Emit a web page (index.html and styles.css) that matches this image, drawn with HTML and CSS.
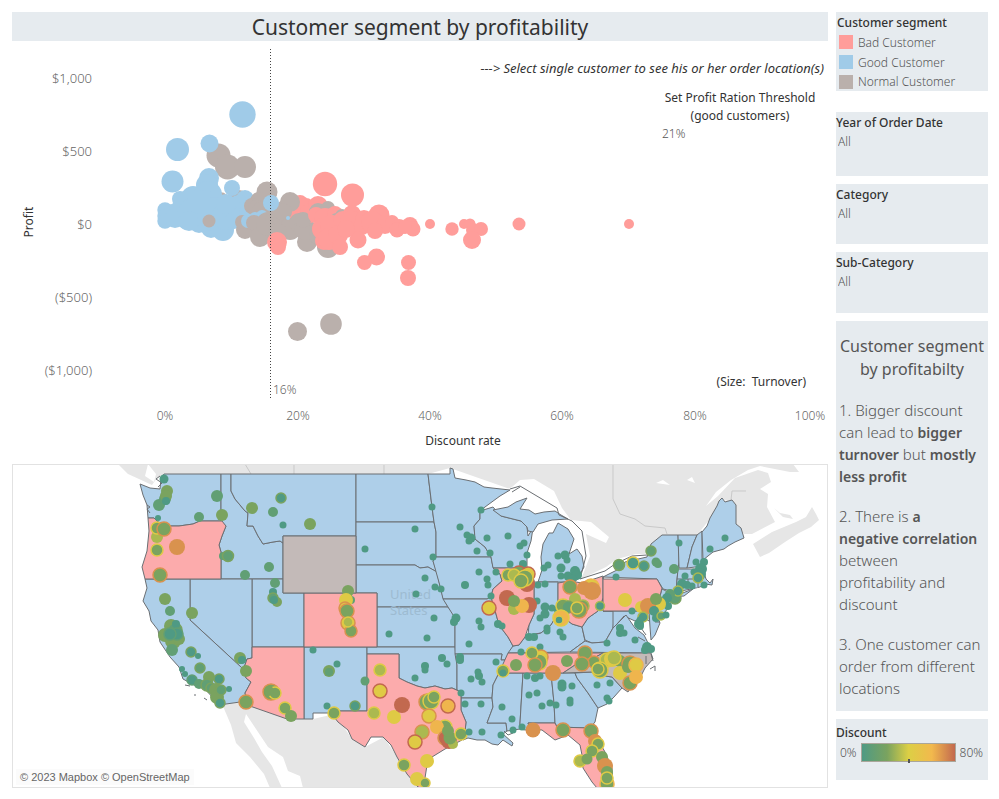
FILE: index.html
```html
<!DOCTYPE html>
<html lang="en">
<head>
<meta charset="utf-8">
<title>Customer segment by profitability</title>
<link rel="stylesheet" href="styles.css">
</head>
<body>
<div class="dashboard">
  <main class="main">
    <h1 class="title">Customer segment by profitability</h1>
    <section class="chart">
      <svg class="plot" viewBox="12 41 816 423" role="img" aria-label="Profit by discount rate">
        <g id="scatter"></g>
        <line class="ref-line" x1="270.5" y1="49" x2="270.5" y2="399"/>
        <g class="axis money">
          <text x="92" y="83">$1,000</text>
          <text x="92" y="156">$500</text>
          <text x="92" y="229">$0</text>
          <text x="92" y="302">($500)</text>
          <text x="92" y="375">($1,000)</text>
        </g>
        <g class="axis middle">
          <text x="165" y="420">0%</text>
          <text x="298" y="420">20%</text>
          <text x="430" y="420">40%</text>
          <text x="562" y="420">60%</text>
          <text x="695" y="420">80%</text>
          <text x="810" y="420">100%</text>
        </g>
        <text class="axis" x="273" y="394">16%</text>
        <text class="axis-title" x="463" y="445">Discount rate</text>
        <text class="axis-title" transform="translate(33 222) rotate(-90)">Profit</text>
      </svg>
      <div class="notes">
        <p class="hint">---&gt; Select single customer to see his or her order location(s)</p>
        <div class="threshold">
          <label for="threshold">Set Profit Ration Threshold<br>(good customers)</label>
          <input id="threshold" type="text" value="21%">
        </div>
      </div>
      <p class="size-note">(Size:&nbsp; Turnover)</p>
    </section>
    <section class="map">
      <svg class="geo" viewBox="13 465 814 322" role="img" aria-label="Order locations by state">
        <g class="land">
          <path d="M118,464 L128,474 L139,479 L152,485 L157,478 L164,474 L428,474 L450,468 L510,489 L520,486 L557,508 L572,521 L582,531 L586,556 L580,579 L605,574 L620,563 L647,553 L662,535 L697,535 L710,519 L722,499 L736,504 L736,524 L744,534 L752,534 L775,522 L767,507 L768,494 L760,489 L771,482 L768,473 L758,470 L735,478 L718,496 L706,506 L716,492 L731,480 L748,470 L760,466 L790,472 L799,472 L793,464 Z"/>
          <path d="M753,544 L760,557 L769,553 L785,542 L799,533 L811,527 L819,520 L816,514 L812,507 L806,517 L796,522 L772,532 Z"/>
          <path d="M774,508 L783,517 L793,519 L790,515 L780,513 Z"/>
          <path d="M222,704 L246,701 L290,719 L313,719 L335,714 L352,739 L365,747 L384,737 L412,780 L420,788 L303,788 L300,776 L288,771 L283,757 L268,747 L260,735 L246,714 L244,722 L254,738 L262,752 L272,766 L282,788 L270,788 L264,774 L250,757 L236,743 L231,725 Z"/>
        </g>
        <g class="water">
          <path d="M485,507 L497,495 L512,487 L520,480 L534,479 L554,491 L562,508 L571,520 L591,522 L609,537 L606,543 L586,534 L590,556 L582,577 L560,525 L535,514 Z"/>
          <path d="M577,581 L606,567 L617,559 L636,554 L646,554 L626,563 L618,572 L605,577 Z"/>
          <path d="M656,483 L663,480 L670,485 Z M687,480 L692,477 L695,483 Z M148,464 L156,474 L154,482 L145,476 Z"/>
        </g>
        <path class="creek" d="M245,464 L251,474 M294,464 V474 M384,464 V474 M613,464 V499 L620,514 L635,519 L645,526 L665,528 L667,534 M731,500 L732,491 L746,491"/>
        <g class="good">
          <path d="M140,484 L150,488 L160,489 L161,478 L164,474 H221 V521 H200 L193,524 L179,526 L169,526 L158,522 L154,518 L148,518 L147,505 L143,495 Z"/>
          <path d="M221,474 H231 V491 L235,499 L245,511 L248,513 L247,526 L253,526 L258,536 L263,544 L273,542 L280,541 L283,543 V579 H221 V552 L219,545 L222,536 L226,526 L221,521 Z"/>
          <path d="M231,474 H356 V536 H283 V543 L280,541 L273,542 L263,544 L258,536 L253,526 L247,526 L248,513 L245,511 L235,499 L231,491 Z"/>
          <path d="M356,474 H428 L430,491 L432,507 L434,522 H356 Z"/>
          <path d="M356,522 H434 L436,532 V557 L433,561 L437,572 L428,567 L420,568 L415,565 H356 Z"/>
          <path d="M356,565 H415 L420,568 L428,567 L437,572 L440,586 L443,597 L448,607 H377 V593 H356 Z"/>
          <path d="M377,607 H448 L452,612 L455,618 V647 H377 Z"/>
          <path d="M252,579 H283 V593 H304 V647 H252 Z"/>
          <path d="M190,579 H252 V658 L247,659 L245,665 L242,668 L190,620 Z"/>
          <path d="M145,579 H190 V620 L242,668 L246,678 L251,682 L245,693 L247,701 L219,705 L214,699 L205,689 L194,685 L183,679 L179,667 L170,657 L160,642 L158,630 L151,621 L149,611 L143,601 L147,588 Z"/>
          <path d="M304,647 H367 V711 H333 L331,713 H313 V719 H304 Z"/>
          <path d="M367,647 H455 L457,665 V690 L452,688 L445,689 L435,686 L425,688 L417,686 L407,682 L399,678 V654 H367 Z"/>
          <path d="M428,474 H450 V468 L453,469 L455,478 L466,480 L475,482 L484,487 L492,488 L510,490 L500,496 L485,507 L480,511 V519 L474,526 L475,539 L485,547 L491,557 H436 V532 L434,522 L432,507 Z"/>
          <path d="M436,557 H491 L493,567 L500,574 L502,581 L493,589 L491,597 L487,599 H443 L440,586 L433,561 Z"/>
          <path d="M480,511 L493,507 L501,516 L521,521 L527,527 L528,536 L533,528 L531,541 L527,553 L527,568 H493 L491,557 L485,547 L475,539 L474,526 L480,519 Z"/>
          <path d="M493,510 L508,507 L516,502 L527,498 L520,509 L529,510 L535,514 L544,512 L555,511 L561,515 L568,519 L552,520 L538,524 L533,532 L528,531 L527,527 L521,521 L501,516 Z"/>
          <path d="M558,523 L568,529 L574,539 L569,554 L577,549 L582,556 L584,567 L577,580 L568,582 H538 L542,570 L541,557 L543,544 L549,533 L553,533 Z"/>
          <path d="M534,582 H558 V613 L551,625 L541,633 L528,635 L529,625 L534,614 Z"/>
          <path d="M443,599 H487 L491,597 L496,614 L499,625 L508,637 L513,646 L510,653 L507,660 H501 L502,654 H455 V618 L448,607 Z"/>
          <path d="M508,653 L513,646 L519,645 L525,637 L541,633 L551,625 L558,613 L572,624 L582,627 L585,641 L570,652 Z"/>
          <path d="M603,598 V611 H615 L613,628 L605,642 L592,643 L585,640 L582,627 L588,618 L598,611 Z"/>
          <path d="M603,611 H655 L651,622 L642,617 L635,621 L624,616 L617,624 L613,628 V611 Z"/>
          <path d="M570,652 L585,641 L592,643 L605,642 L613,628 L620,621 L626,615 L635,628 L644,635 L649,645 L651,653 Z"/>
          <path d="M649,611 L655,611 L660,623 L655,635 L651,640 L650,627 Z"/>
          <path d="M603,577 L617,570 L625,562 L647,557 L651,544 L662,535 H678 L679,561 L677,579 L676,592 L663,589 L657,579 Z"/>
          <path d="M678,535 H697 L692,547 L687,568 H679 Z"/>
          <path d="M697,535 L702,531 V557 L703,566 L687,568 L692,547 Z"/>
          <path d="M702,532 L707,526 L710,518 L717,506 L719,501 L722,498 L725,502 L732,500 L736,505 V524 L741,528 L744,538 L735,542 L728,546 L724,549 L713,552 L708,556 L703,560 Z"/>
          <path d="M678,569 H703 L706,579 L710,583 L713,579 L712,585 L705,584 L700,587 L691,589 L676,592 Z"/>
          <path d="M677,579 H698 V588 M688,579 V589"/>
          <path d="M670,597 L680,594 L693,589 L684,596 Z"/>
          <path d="M662,589 L668,592 L669,607 L660,618 L655,610 L664,601 L660,596 Z"/>
          <path d="M455,654 H502 L501,660 H507 L499,673 L493,685 L492,698 H461 V692 L457,690 V665 Z"/>
          <path d="M461,698 H492 L493,707 L487,723 H506 L507,731 L503,734 L513,743 L512,746 L503,740 L498,745 L492,744 L485,740 L477,740 L468,738 L463,740 L465,732 L466,722 L461,710 Z"/>
          <path d="M499,673 H523 L520,723 V729 L507,731 L506,723 H487 L493,707 L492,698 L493,685 Z"/>
          <path d="M523,673 H551 L554,703 L555,723 H528 L530,729 L525,730 L520,729 V723 Z"/>
          <path d="M551,673 H575 L577,678 L588,693 L598,708 L595,722 L590,728 L557,727 L555,723 L554,703 Z"/>
          <path d="M575,673 L592,672 L598,675 L612,677 L622,688 L614,697 L607,704 L598,708 L588,693 L577,678 Z"/>
        </g>
        <g class="bad">
          <path d="M148,518 L154,518 L158,522 L169,526 L179,526 L193,524 L200,521 H222 L226,526 L222,536 L219,545 L221,552 V579 H145 L142,567 L147,551 L149,531 Z"/>
          <path d="M304,593 H377 V647 H304 Z"/>
          <path d="M252,647 H304 V719 H287 L247,705 V701 L245,693 L251,682 L246,678 L242,668 L245,665 L247,659 L252,658 Z"/>
          <path d="M367,654 H399 V678 L407,682 L417,686 L425,688 L435,686 L445,689 L452,688 L461,692 V710 L466,722 L465,732 L462,740 L445,749 L432,757 L427,765 L425,778 L428,790 L418,787 L407,774 L397,757 L391,745 L383,737 H371 L365,747 L352,739 L348,730 L338,722 L331,713 L333,711 H367 Z"/>
          <path d="M493,568 H527 L534,580 V614 L529,625 L525,637 L519,645 L513,646 L508,637 L499,625 L496,614 L491,597 L493,589 L502,581 L500,574 Z"/>
          <path d="M558,583 L570,581 L582,583 L603,576 V598 L598,611 L588,618 L582,627 L572,624 L558,613 Z"/>
          <path d="M603,577 V611 H655 L664,601 L660,596 L662,588 L657,579 H603 Z"/>
          <path d="M508,653 H603 L592,659 L575,665 L563,673 H499 L503,664 Z"/>
          <path d="M528,723 H555 L557,727 L590,728 L594,725 L597,738 L605,752 L612,768 L613,788 H597 L592,782 L583,768 L582,755 L580,745 L568,735 L555,740 L542,730 L530,729 Z"/>
        </g>
        <g class="normal">
          <path d="M283,536 H356 V593 H283 Z"/>
          <path d="M603,653 H651 L653,659 L645,668 L640,678 L632,685 L628,692 L622,688 L612,677 L598,675 L592,672 L563,673 L575,665 L592,659 Z"/>
        </g>
        <path class="border" d="M510,489 L520,486 L557,508 L559,515 L572,521 L582,531 L586,556 L580,579 L605,571 L615,564 L632,556 L647,555 M512,492 L520,487 M651,654 L653,661 M650,669 L655,666 V671 M646,656 V664 M185,685 L190,686 M194,695 H196 M204,698 L207,700 M160,476 L156,479 L162,483 L158,487 M147,505 L150,507 L147,509 L150,513 M641,628 L646,635 M638,637 L645,641 M655,622 H660 M504,731 L508,735 L513,733"/>
        <text class="country" x="390" y="599">United</text>
        <text class="country" x="390" y="615">States</text>
        <g id="cities"></g>
      </svg>
      <p class="credit">© 2023 Mapbox © OpenStreetMap</p>
    </section>
  </main>
  <aside class="side">
    <section class="panel legend">
      <h2>Customer segment</h2>
      <ul>
        <li><span class="swatch swatch-bad"></span>Bad Customer</li>
        <li><span class="swatch swatch-good"></span>Good Customer</li>
        <li><span class="swatch swatch-normal"></span>Normal Customer</li>
      </ul>
    </section>
    <section class="panel filter">
      <label for="year">Year of Order Date</label>
      <select id="year"><option>All</option></select>
    </section>
    <section class="panel filter">
      <label for="category">Category</label>
      <select id="category"><option>All</option></select>
    </section>
    <section class="panel filter">
      <label for="subcategory">Sub-Category</label>
      <select id="subcategory"><option>All</option></select>
    </section>
    <section class="panel story">
      <h2>Customer segment by profitabilty</h2>
      <p>1. Bigger discount can lead to <b>bigger turnover</b> but <b>mostly less profit</b></p>
      <p>2. There is <b>a<br>negative correlation</b> between<br>profitability and discount</p>
      <p>3. One customer can order from different locations</p>
    </section>
    <section class="panel scale">
      <h2>Discount</h2>
      <div class="scale-row"><span>0%</span><div class="ramp"></div><span>80%</span></div>
    </section>
  </aside>
</div>
<script src="script.js"></script>
</body>
</html>
```
FILE: styles.css
```css
* { box-sizing: border-box; }
body {
  margin: 0;
  background: #fff;
  color: #333;
  font-family: "Noto Sans", "Open Sans", sans-serif;
  font-size: 12px;
}
h1, h2, p, ul { margin: 0; padding: 0; }
.dashboard {
  display: grid;
  grid-template-columns: 1fr 152px;
  gap: 8px;
  align-items: start;
  padding: 12px 11px 11px 12px;
}
.title {
  background: #e6ebef;
  color: #333;
  font-size: 21px;
  font-weight: 400;
  line-height: 30px;
  height: 29px;
  text-align: center;
}
.chart { position: relative; }
.plot, .geo { display: block; width: 100%; height: auto; }
.axis { fill: #666; font-size: 12px; font-weight: 300; }
.money { font-size: 13px; text-anchor: end; }
.middle { text-anchor: middle; }
.axis-title { fill: #333; font-size: 12px; text-anchor: middle; }
.ref-line { stroke: #444; stroke-width: 1; stroke-dasharray: 1 2; }
.notes {
  position: absolute;
  top: 18px;
  right: 4px;
  display: flex;
  flex-direction: column;
  align-items: flex-end;
  gap: 12px;
}
.hint { font-size: 13px; line-height: 18px; font-style: italic; }
.threshold { display: flex; flex-direction: column; width: 162px; padding-right: 6px; }
.threshold label { font-size: 12px; line-height: 18px; text-align: center; }
.threshold input {
  width: 100%;
  height: 18px;
  padding: 0;
  border: 0;
  background: none;
  color: #555;
  font: 300 12px/18px "Noto Sans", sans-serif;
}
.size-note { position: absolute; right: 22px; bottom: 73px; line-height: 18px; }
.map { position: relative; border: 1px solid #e2e2e2; }
.land path { fill: #e6e6e6; }
.water path { fill: #fff; }
.creek { fill: none; stroke: #c9c9c9; stroke-width: 1; }
.good path, .bad path, .normal path { stroke: #6b6f73; stroke-width: 1; stroke-linejoin: round; }
.good path { fill: #aecfe9; }
.bad path { fill: #fcabac; }
.normal path { fill: #c3bab8; }
.border { fill: none; stroke: #6b6f73; stroke-width: 1; }
.country { fill: #9dbbd1; font-size: 13px; }
.credit {
  position: absolute;
  left: 3px;
  bottom: 2px;
  padding: 0 4px;
  background: rgba(250, 250, 250, 0.8);
  color: #666;
  font: 11px/16px "Liberation Sans", sans-serif;
}
.side { display: flex; flex-direction: column; gap: 8px; }
.panel { background: #e6ebef; }
.panel h2, .filter label { color: #333; font-size: 12px; font-weight: 500; line-height: 20px; }
.legend { padding: 2px 1px 0; margin-bottom: 13px; }
.legend h2 { line-height: 18px; }
.legend ul { list-style: none; }
.legend li {
  display: flex;
  align-items: center;
  gap: 5px;
  height: 20px;
  padding-left: 2px;
  color: #555;
  font-weight: 300;
}
.legend li:last-child { height: 19px; }
.swatch { width: 14px; height: 14px; }
.swatch-bad { background: #ff9d9a; }
.swatch-good { background: #a0cbe8; }
.swatch-normal { background: #bab0ac; }
.filter { display: flex; flex-direction: column; min-height: 61px; padding-top: 1px; }
.filter:nth-child(2) { min-height: 64px; }
.filter:nth-child(3) { min-height: 60px; }
.filter select {
  appearance: none;
  height: 18px;
  padding: 0 2px;
  border: 0;
  background: none;
  color: #555;
  font: 300 12px/18px "Noto Sans", sans-serif;
}
.story {
  display: flex;
  flex-direction: column;
  gap: 18px;
  padding: 14px 3px 12px;
  color: #555;
  font-size: 15px;
  font-weight: 300;
  line-height: 22px;
}
.story h2 { color: #555; font-size: 16px; font-weight: 400; line-height: 23px; text-align: center; }
.story b { color: #555; font-size: 14px; font-weight: 600; line-height: 20px; }
.scale { min-height: 61px; padding: 4px 0 0; }
.scale-row { display: flex; align-items: center; gap: 4px; padding: 0 5px 0 4px; color: #555; font-weight: 300; }
.ramp {
  position: relative;
  flex: 1;
  height: 19px;
  border: 1px solid #aaa69a;
  background: linear-gradient(90deg, #4f9a84, #7aa35f 27%, #dccf45 50%, #f2b94d 75%, #c2694f);
}
.ramp::after { content: ""; position: absolute; left: 50%; bottom: -2px; width: 2px; height: 4px; background: #555; }
```
FILE: script.js
```js
const SEGMENT = { p: '#ff9d9a', b: '#a0cbe8', n: '#bab0ac' };
const DISCOUNT = {
  t: '#4f9a84', g: '#619f74', o: '#7aa35f', l: '#abb950',
  y: '#dfca45', a: '#efb54d', r: '#d9924e', x: '#c2694f'
};

// Customers: x y radius segment
const customers = `
242.5 114.5 13.2 b;177.5 149.5 11.5 b;172.5 181.5 11 b;218.5 155.5 12 n;227.5 167 12.5 n;245 167 11 n;209.5 143.5 9 b;
220 202 10 n;239 200 10 n;229 212 14 n;245 199 9 b;239 207 12 b;240 214 12 b;248 212 9 b;
165 210 7.7 b;165 216 7.7 b;165 221 7.7 b;172 213 9 b;175 218 10 b;180 199 8 b;184 207 12 b;193 198 12 b;
188 218 12 b;193 213 15 b;209 178 10 b;207 185 11 b;208 195 14 b;203 208 18 b;199 223 10 b;189 221 10 b;
211 228 10 b;214 214 17 b;223 230 11 b;226 216 14 b;234 220 9 b;226 204 10 b;232 188 8 b;209 221 6.5 n;
267 192 10.5 n;259 201 9 n;252 206 8 n;257 209 9 n;263 212 11 n;245 230 9 n;242 222 7 n;248 221 7 b;255 218 6 b;
262 216 6 b;254 223 8 n;260 237 10 n;268 224 12 n;278 220 13 n;283 209 8 n;
300 203 8 p;297 209 9 p;306 206 8 p;290 215 8 p;
290 202 10 n;283 212 9 n;290 229 11 n;299 223 10 n;307 242 10 n;278 232 9 n;288 218 2 b;305 229 11 n;318 236 9 n;
271 203 8 b;277 242 10 p;278 247 8 p;328 247 11 n;310 213 10 p;303 220 8 n;
325 184 12.2 p;318 206 10 p;352.5 195 11.5 p;318 212 9 n;328 208 7 n;316 215 8 p;325 219 11 p;335 214 8 p;342 216 7 n;337 221 8 n;
323 229 11 p;332 227 12 p;343 221 10 p;352 214 9 p;352 223 12 p;364 219 9 p;362 226 9 p;379 215 10.5 p;372 222 11 p;
385 225 9 p;392 222 7 p;399 227 8 p;397 230 7.5 p;410 225 8 p;413 229 7.5 p;405 227 7 p;375 231 8 p;358 240 8.5 p;
324 241 9 p;329 239 11 p;338 235 10 p;340 247 8 p;346 229 9 p;
430 224 5 p;452 229 6.7 p;464 224 5 p;470 224 5.5 p;473 230 7 p;481 229 7 p;472 240 9 p;519 224 6.5 p;629 224 5 p;
376.5 257 8.5 p;364.5 262.5 7.5 p;408.5 262.5 7.5 p;408 278 8 p;331 324 10.8 n;297.5 331.5 9.5 n`;

// Cities: x y radius discount [outer ring discount]
const cities = `
164 479 4.5 t;167 491 6 o;159 505 6 g;165 499 6 g;166 496 6 o;166 501 4 t;199 517 5 g;217 496 6 g;222 515 6 o;158 518 3 t;
157 537 6 l;157 528 6 o y;164 529 7 o r;157 550 6 o y;177 547 8 r;160 575 7 o r;165 599 6 o;170 611 5 g;192 613 6 o;
171 626 7 o;165 635 7 o;173 641 8 o;179 639 6 o;175 630 7 g o;176 624 4 t;177 634 6 t g;170 634 6 t g;172 650 6 g;
191 652 5 t o;198 656 3 t;200 668 5 g o;182 669 3 t;185 674 3 t;192 680 5 t g;199 684 5 g;209 677 6 o;207 685 6 g o;211 688 5 g o;
219 679 5 t o;216 690 7 o;217 697 7 o;220 703 5 t o;221 690 5 g o;229 689 3 t;240 658 6 o;242 660 4 t;246 671 6 o;246 702 7 o r;
271 692 8 o r;275 693 6 o y;269 691 5 o;285 708 6 o y;291 716 6 o;313 650 3.5 t;337 664 3.5 t;329 671 6 o;329 672 4 g;327 706 3.5 t;334 713 6 o y;
355 706 5 t o;365 681 4.5 g;252 508 6 o;281 498 5 t o;273 512 5 g;283 525 3.5 t;310 524 6 o;223 556 4 g;228 556 5.5 g o;
269 567 5 g;245 575 5 g;275 583 5 g;273 592 4 t;273 598 5 g o;277 602 5 o;274 600 4 t;348 591 6 o;351 600 4 g;346 600 7 y;345 608 6 y r;
348 623 7 y r;347 611 7 o r;351 631 6 o r;348 622 5 l y;365 549 3.5 t;415 529 3.5 t;425 578 3.5 t;416 594 3.5 t;389 634 3.5 t;427 638 3.5 t;
380 670 6 l y;380 691 7 y x;374 713 6 l y;394 717 7 y;402 705 8 x;425 666 4 t;425 670 3.5 t;415 678 3.5 t;
427 702 8 o r;431 701 8 o y;434 697 6 o y;448 706 7 a x;429 716 7 y r;422 732 7 l r;415 742 7 y x;445 727 7 o y;437 727 7 a;
445 738 7 x r;449 741 8 x;453 744 5 l;450 738 6.5 o;448 731 6 o;461 734 6 o y;404 765 6 o y;427 761 7 y;417 779 7 y;425 783 5 o y;
432 507 3.5 t;481 510 3.5 t;460 527 3.5 t;467 535 3.5 t;471 538 4.5 t;469 541 3.5 t;487 538 3.5 t;508 536 3.5 t;477 551 3.5 t;490 553 3.5 t;
520 546 3.5 t;524 543 3.5 t;527 555 3.5 t;433 557 3.5 t;479 572 3.5 t;496 572 3.5 t;510 564 3.5 t;523 564 4 t;487 579 3.5 t;488 585 3.5 t;
465 585 4 t;435 587 3.5 t;441 589 3.5 t;434 618 3.5 t;456 618 4.5 t;454 622 4 t;479 621 3.5 t;481 627 3.5 t;491 596 3.5 t;498 624 4 t;502 626 3.5 t;
558 556 3.5 t;565 555 4.5 t;567 560 3.5 t;548 565 3.5 t;544 568 3.5 t;561 568 4.5 t;561 576 3.5 t;568 576 4.5 t;575 571 5 t;577 575 5 t;572 579 4.5 t;
538 585 3.5 t;545 584 3.5 t;537 601 3.5 t;545 607 4.5 t;545 614 4.5 t;552 608 3.5 t;558 610 4 t;540 618 3.5 t;547 628 3.5 t;616 577 3.5 t;
508 575 6 o y;519 573 7 o x;528 574 7 y x;527 584 8 x;514 575 6 l y;525 578 8 o y;521 581 7 o y;489 608 7 y x;507 598 8 x;529 605 8 x;514 609 6 l;
522 606 7 a;514 601 6 o;570 587 7 o r;591 587 8 y a;584 588 7 r;592 591 9 r;575 599 6 l;583 606 6 o l;563 606 7 o y;568 607 6 g o;
579 610 8 o r;577 608 6 o y;561 618 8 a y;559 620 4 t y;600 606 4.5 t l;619 565 5.5 g o;633 563 6 t y;625 600 7 y;
679 543 3.5 t;725 538 3.5 t;710 549 3.5 t;651 551 5 g o;644 566 5 t o;656 562 4.5 g;658 564 4 g;674 569 5 g;
696 562 3.5 t;704 562 4 t;701 569 6 t;700 574 6 t;694 572 3.5 t;698 578 5 t l;704 585 3.5 t;692 586 3.5 t;687 585 4 t;685 576 3.5 t;682 584 5 t;
675 598 6 g o;678 591 5 t l;670 594 5 g;667 598 5 t;668 606 4 t;659 604 7 y;641 607 6 y;648 606 8 r;656 599 6 o;654 611 5 t;632 611 3.5 t;
643 617 5 t l;639 624 5 t;640 620 3.5 t;656 618 4 t;661 616 4 g l;666 615 3.5 t;620 628 4 t;620 633 4 t;624 633 3.5 t;635 640 3.5 t;640 626 4 t;
647 647 5 t;645 650 4 t;651 649 4 t;607 643 3.5 t;469 644 3.5 t;442 658 4 t;447 664 3.5 t;460 657 4 t;460 660 4 t;478 672 3.5 t;479 676 4 t;
482 682 3.5 t;471 679 3.5 t;496 662 3.5 t;461 693 3.5 t;465 704 3.5 t;481 704 3.5 t;502 707 3.5 t;512 719 3.5 t;469 732 3.5 t;482 732 3.5 t;
501 735 3.5 t;513 730 3.5 t;522 727 3.5 t;529 695 3.5 t;537 693 3.5 t;527 676 3.5 t;535 678 4 t;540 676 3.5 t;542 706 3.5 t;550 703 3.5 t;
556 705 3.5 t;562 684 4.5 t;562 687 4.5 t;572 686 3.5 t;570 700 3.5 t;570 703 3.5 t;597 685 3.5 t;610 683 3.5 t;607 698 3.5 t;609 701 3.5 t;
521 652 3.5 t;529 637 4 t;534 637 4 t;540 647 3.5 t;547 631 3.5 t;560 632 3.5 t;563 637 3.5 t;503 671 6 o y;503 673 3.5 t;516 665 6 o;
541 657 7 y r;539 662 8 o y;532 653 6 o y;535 665 7 o r;553 673 8 r;567 661 6 o;585 653 7 o r;594 662 6 o r;582 664 7 o r;
607 660 7 l y;612 659 8 y;620 661 6 o;614 658 7 l y;600 670 8 o y;598 669 6 o y;620 673 7 y;630 664 8 o r;628 667 6 o;636 665 7 y a;630 683 7 o r;636 677 7 a;
533 730 7.5 r;563 730 7 o r;591 731 7 o r;595 741 7 r;598 744 6 o y;592 751 6 o y;602 757 6 o;580 761 6 l y;587 759 5.5 o;605 766 8 r;
607 772 6 o;607 784 7 o a;607 778 6 o y`;

function draw(id, data, colours) {
  const group = document.getElementById(id);
  for (const row of data.split(';')) {
    const [x, y, r, fill, ring] = row.trim().split(' ');
    const dot = document.createElementNS('http://www.w3.org/2000/svg', 'circle');
    dot.setAttribute('cx', x);
    dot.setAttribute('cy', y);
    dot.setAttribute('r', r);
    dot.setAttribute('fill', colours[fill]);
    if (ring) {
      dot.setAttribute('stroke', colours[ring]);
      dot.setAttribute('stroke-width', 1.5);
    }
    group.append(dot);
  }
}

draw('scatter', customers, SEGMENT);
draw('cities', cities, DISCOUNT);
```
